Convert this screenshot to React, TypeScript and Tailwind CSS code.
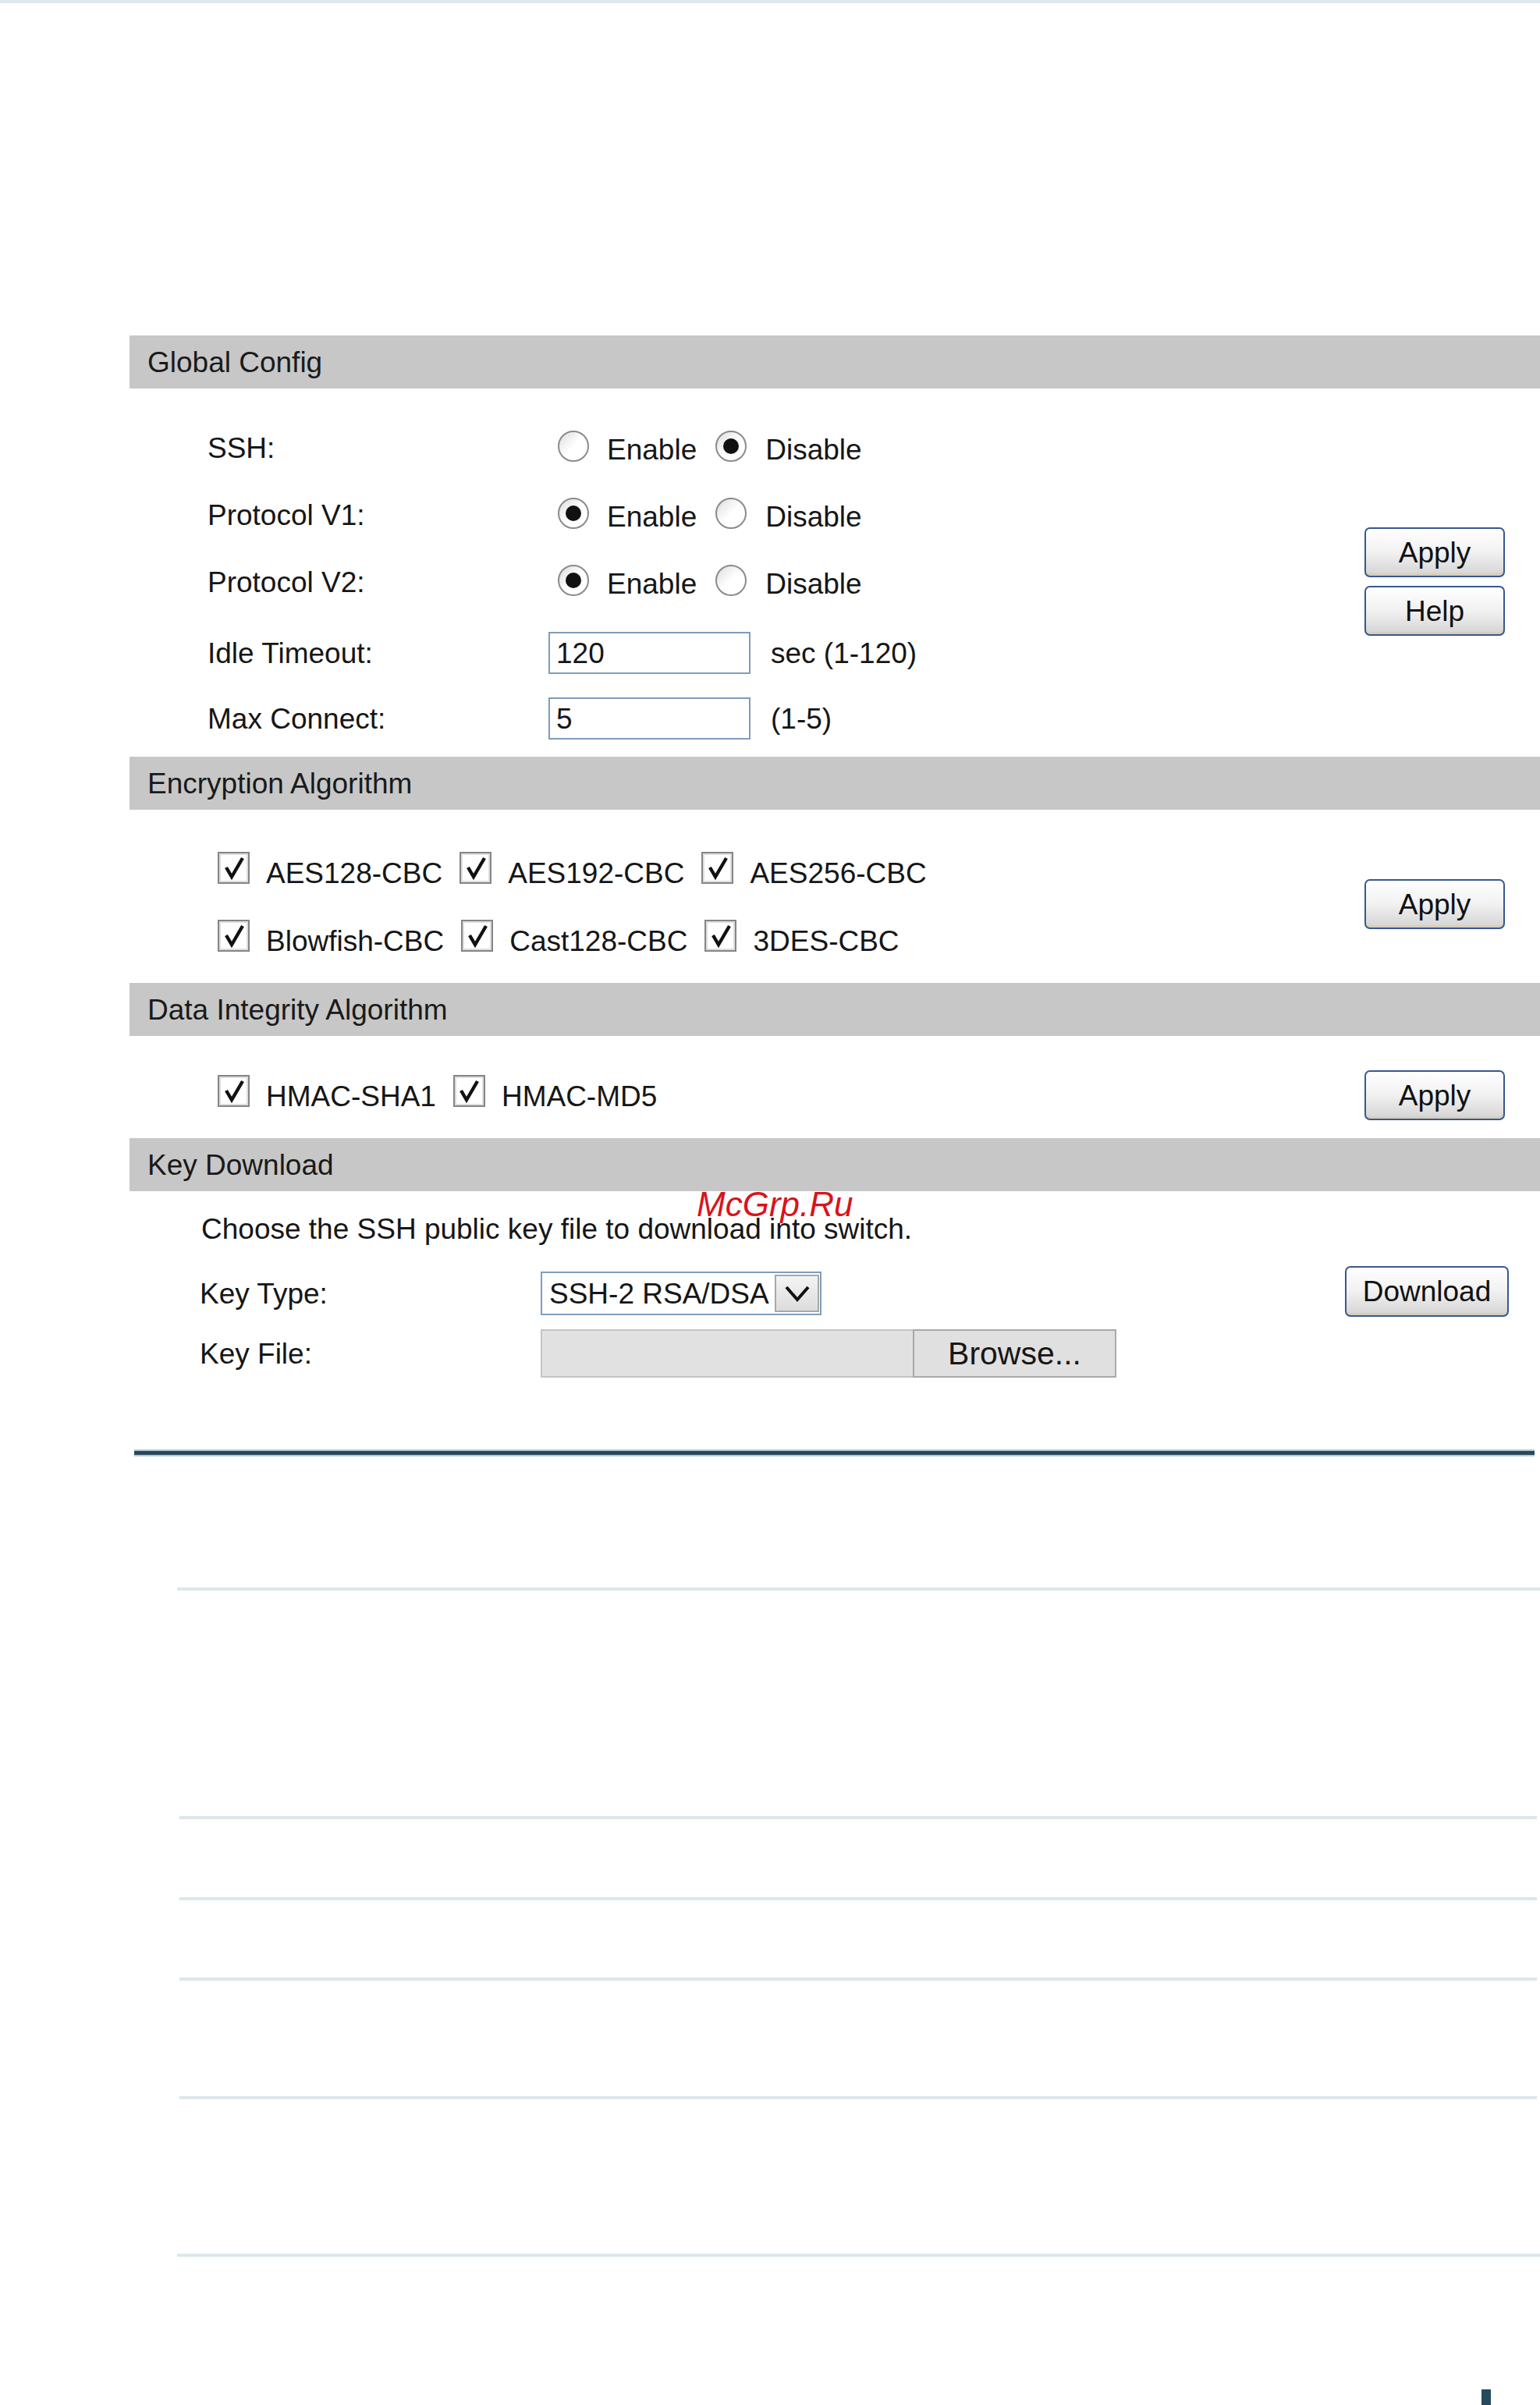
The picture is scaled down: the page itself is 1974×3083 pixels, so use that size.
import React from "react";

function Header({ title }: { title: string }) {
  return (
    <div className="h-[68px] bg-[#c7c7c7] flex items-center pl-[23px] text-[37px] leading-none text-[#1a1a1a]">
      {title}
    </div>
  );
}

function Radio({ checked }: { checked?: boolean }) {
  return (
    <span className="w-[40px] h-[40px] rounded-full border-2 border-[#8b8b8b] bg-linear-to-br from-[#dcdcdc] via-white to-white flex items-center justify-center shrink-0">
      {checked && <span className="w-[20px] h-[20px] rounded-full bg-[#111]" />}
    </span>
  );
}

function Check() {
  return (
    <span className="w-[41px] h-[41px] border-2 border-[#858585] bg-white shadow-[inset_0_0_0_2px_#dedede] flex items-center justify-center shrink-0">
      <svg width="32" height="32" viewBox="0 0 32 32">
        <path d="M6 15 L13 27 L27 3" fill="none" stroke="#111" strokeWidth="4.4" strokeLinejoin="miter" />
      </svg>
    </span>
  );
}

function Btn({ label, wide }: { label: string; wide?: boolean }) {
  return (
    <div
      className={
        wide
          ? "w-[210px] h-[65px] rounded-[7px] border-2 border-[#38578f] bg-linear-to-b from-white via-[#f1f1f1] to-[#d4d4d4] shadow-[inset_0_-3px_0_rgba(214,196,140,0.35)] flex items-center justify-center text-[37px] leading-none text-[#111]"
          : "w-[180px] h-[64px] rounded-[7px] border-2 border-[#38578f] bg-linear-to-b from-white via-[#f1f1f1] to-[#d4d4d4] shadow-[inset_0_-3px_0_rgba(214,196,140,0.35)] flex items-center justify-center text-[37px] leading-none text-[#111]"
      }
    >
      {label}
    </div>
  );
}

function RadioRow({ label, first }: { label: string; first: boolean }) {
  return (
    <div className="h-[86px] flex items-center">
      <span className="w-[437px] mt-[5px]">{label}</span>
      <span className="ml-[12px]">
        <Radio checked={first} />
      </span>
      <span className="ml-[23px] mt-[8px]">Enable</span>
      <span className="ml-[24px]">
        <Radio checked={!first} />
      </span>
      <span className="ml-[24px] mt-[8px]">Disable</span>
    </div>
  );
}

function CheckItem({ label, first }: { label: string; first?: boolean }) {
  return (
    <div className={first ? "flex items-center" : "flex items-center ml-[22px]"}>
      <Check />
      <span className="ml-[21px] mt-[13px]">{label}</span>
    </div>
  );
}

export default function App() {
  return (
    <div className="relative w-[1974px] h-[3083px] overflow-hidden bg-white font-['Liberation_Sans',Arial,sans-serif] text-[37px] leading-none text-[#161616]">
      <div className="h-[4px] bg-[#dde7eb]" />
      <div className="pt-[426px] pl-[166px]">
        {/* Global Config */}
        <Header title="Global Config" />
        <div className="flex">
          <div className="flex-1 pt-[31px] pb-[22px] pl-[100px]">
            <RadioRow label="SSH:" first={false} />
            <RadioRow label="Protocol V1:" first={true} />
            <RadioRow label="Protocol V2:" first={true} />
            <div className="mt-[23px] h-[54px] flex items-center">
              <span className="w-[437px]">Idle Timeout:</span>
              <div className="w-[259px] h-[54px] border-2 border-[#7f9db9] bg-white flex items-center pl-[8px]">120</div>
              <span className="ml-[26px]">sec (1-120)</span>
            </div>
            <div className="mt-[30px] h-[54px] flex items-center">
              <span className="w-[437px]">Max Connect:</span>
              <div className="w-[259px] h-[54px] border-2 border-[#7f9db9] bg-white flex items-center pl-[8px]">5</div>
              <span className="ml-[26px]">(1-5)</span>
            </div>
          </div>
          <div className="w-[225px] pt-[178px] flex flex-col gap-[11px]">
            <Btn label="Apply" />
            <Btn label="Help" />
          </div>
        </div>

        {/* Encryption Algorithm */}
        <Header title="Encryption Algorithm" />
        <div className="flex">
          <div className="flex-1 pt-[54px] pb-[40px] pl-[113px] flex flex-col gap-[46px]">
            <div className="h-[41px] flex items-center">
              <CheckItem label="AES128-CBC" first />
              <CheckItem label="AES192-CBC" />
              <CheckItem label="AES256-CBC" />
            </div>
            <div className="h-[41px] flex items-center">
              <CheckItem label="Blowfish-CBC" first />
              <CheckItem label="Cast128-CBC" />
              <CheckItem label="3DES-CBC" />
            </div>
          </div>
          <div className="w-[225px] pt-[89px]">
            <Btn label="Apply" />
          </div>
        </div>

        {/* Data Integrity Algorithm */}
        <Header title="Data Integrity Algorithm" />
        <div className="flex">
          <div className="flex-1 pt-[50px] pb-[40px] pl-[113px]">
            <div className="h-[41px] flex items-center">
              <CheckItem label="HMAC-SHA1" first />
              <CheckItem label="HMAC-MD5" />
            </div>
          </div>
          <div className="w-[225px] pt-[44px]">
            <Btn label="Apply" />
          </div>
        </div>

        {/* Key Download */}
        <Header title="Key Download" />
        <div className="flex">
          <div className="flex-1 pt-[30px] pb-[92px] pl-[90px]">
            <div className="h-[37px] ml-[2px]">Choose the SSH public key file to download into switch.</div>
            <div className="mt-[36px] h-[56px] flex items-center">
              <span className="w-[437px]">Key Type:</span>
              <div className="w-[360px] h-[56px] border-2 border-[#7f9db9] bg-white flex items-center">
                <span className="flex-1 pl-[9px] whitespace-nowrap">SSH-2 RSA/DSA</span>
                <span className="w-[57px] h-[48px] mr-[1px] border-2 border-[#a8a8a8] bg-linear-to-b from-[#f4f4f4] to-[#dcdcdc] flex items-center justify-center">
                  <svg width="34" height="24" viewBox="0 0 34 24">
                    <path d="M3 4 L17 20 L31 4" fill="none" stroke="#111" strokeWidth="4" />
                  </svg>
                </span>
              </div>
            </div>
            <div className="mt-[18px] h-[62px] flex items-center">
              <span className="w-[437px]">Key File:</span>
              <div className="flex h-[62px]">
                <div className="w-[477px] h-[62px] bg-[#e1e1e1] border-2 border-r-0 border-[#c4c4c4]" />
                <div className="w-[261px] h-[62px] bg-[#e0e0e0] border-2 border-[#a9a9a9] flex items-center justify-center text-[41px]">
                  Browse...
                </div>
              </div>
            </div>
          </div>
          <div className="w-[250px] pt-[96px]">
            <Btn label="Download" wide />
          </div>
        </div>

        {/* document rule */}
        <div className="ml-[6px] w-[1795px]">
          <div className="h-[2px] bg-[#b9c9d1]" />
          <div className="h-[5px] bg-[#26495b]" />
          <div className="h-[2px] bg-[#b9c9d1]" />
        </div>

        <div className="mt-[168px] ml-[61px] w-[1747px] h-[4px] bg-[#dde7eb]" />
        <div className="mt-[289px] ml-[64px] w-[1740px] h-[4px] bg-[#dde7eb]" />
        <div className="mt-[100px] ml-[64px] w-[1740px] h-[4px] bg-[#dde7eb]" />
        <div className="mt-[99px] ml-[64px] w-[1740px] h-[4px] bg-[#dde7eb]" />
        <div className="mt-[148px] ml-[64px] w-[1740px] h-[4px] bg-[#dde7eb]" />
        <div className="mt-[198px] ml-[61px] w-[1747px] h-[4px] bg-[#dde7eb]" />
        <div className="mt-[170px] ml-[1733px] w-[12px] h-[20px] bg-[#26495b]" />
      </div>

      <div className="absolute left-[893px] top-[1522px] text-[44px] italic leading-none text-[#d8141b]">McGrp.Ru</div>
    </div>
  );
}
